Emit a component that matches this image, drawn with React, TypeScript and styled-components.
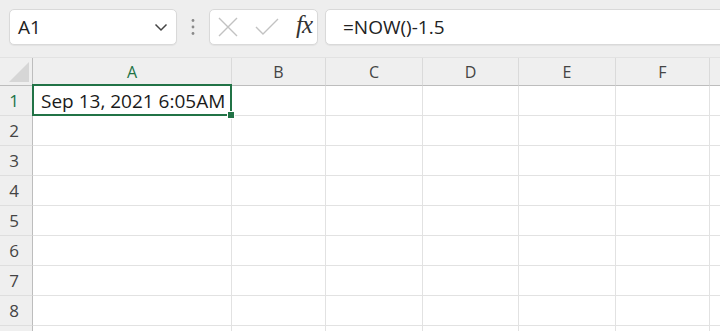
import React from 'react';
import styled, { createGlobalStyle } from 'styled-components';

const GlobalStyle = createGlobalStyle`
  html, body {
    margin: 0;
    padding: 0;
    background: #eeeeee;
    overflow: hidden;
  }
`;

const Page = styled.div`
  width: 720px;
  height: 331px;
  overflow: hidden;
  font-family: 'Open Sans', 'Noto Sans', sans-serif;
  background: #eeeeee;
`;

const Toolbar = styled.div`
  display: flex;
  align-items: center;
  height: 57px;
  padding: 0 0 3px 9px;
  box-sizing: border-box;
`;

const Box = styled.div<{ $width?: string }>`
  display: flex;
  align-items: center;
  height: 36px;
  box-sizing: border-box;
  width: ${(p) => p.$width || 'auto'};
  background: #fff;
  border: 1px solid #d9d9d9;
  border-radius: 5px;
  box-shadow: 0 1px 1px rgba(0, 0, 0, 0.05);
`;

const NameBox = styled(Box)`
  justify-content: space-between;
  padding: 0 8px 0 8px;
  font-size: 19px;
  color: #222;
`;

const Dots = styled.div`
  width: 32px;
  display: flex;
  justify-content: center;
`;

const FxBox = styled(Box)`
  margin-right: 7px;
  padding: 0 5px 0 8px;
  justify-content: space-between;
`;

const Fx = styled.span`
  font-family: 'Liberation Serif', 'DejaVu Serif', serif;
  font-style: italic;
  font-size: 25px;
  color: #333;
  letter-spacing: -1px;
  padding-bottom: 4px;
`;

const FormulaBox = styled(Box)`
  flex: 1;
  margin-right: -10px;
  padding-left: 17px;
  font-size: 19px;
  color: #222;
`;

// the last column runs past the window edge, as in the reference
const Grid = styled.div`
  display: grid;
  width: 806px;
  grid-template-columns: 33px 199px 94px 97px 96px 97px 94px 96px;
  grid-template-rows: 28px;
  grid-auto-rows: 30px;
  background: #fff;
  border-top: 1px solid #e2e2e2;
`;

const ColHead = styled.div<{ $active?: boolean }>`
  display: flex;
  align-items: center;
  justify-content: center;
  background: #efefef;
  border-right: 1px solid #dadada;
  border-bottom: 1px solid #bdbdbd;
  font-size: 16px;
  color: ${(p) => (p.$active ? '#217346' : '#444')};
`;

const Corner = styled.div`
  position: relative;
  background: #efefef;
  border-right: 1px solid #bdbdbd;
  border-bottom: 1px solid #bdbdbd;
`;

const RowHead = styled.div<{ $active?: boolean }>`
  display: flex;
  align-items: center;
  justify-content: center;
  padding-right: 4px;
  background: #efefef;
  border-right: 1px solid #bdbdbd;
  border-bottom: 1px solid #dedede;
  font-size: 17px;
  color: ${(p) => (p.$active ? '#217346' : '#444')};
`;

const Cell = styled.div<{ $selected?: boolean }>`
  position: relative;
  display: flex;
  align-items: center;
  padding-left: 8px;
  border-right: 1px solid #e2e2e2;
  border-bottom: 1px solid #e2e2e2;
  font-size: 19px;
  color: #1a1a1a;
  white-space: nowrap;
  ${(p) =>
    p.$selected &&
    `
    &::after {
      content: '';
      position: absolute;
      top: -2px;
      left: -1px;
      right: -1px;
      bottom: -1px;
      border: 2px solid #217346;
      pointer-events: none;
    }
  `}
`;

const Handle = styled.span`
  position: absolute;
  right: -4px;
  bottom: -4px;
  width: 6px;
  height: 6px;
  background: #217346;
  border: 1px solid #fff;
  z-index: 2;
`;

// the G column only shows its first pixels, so its letter stays out of view
const columns = ['A', 'B', 'C', 'D', 'E', 'F', 'G'];
const visibleHeads = ['A', 'B', 'C', 'D', 'E', 'F'];
const rows = [1, 2, 3, 4, 5, 6, 7, 8, 9];

function App() {
  return (
    <Page>
      <GlobalStyle />
      <Toolbar>
        <NameBox $width="168px">
          <span>A1</span>
          <svg width="14" height="9" viewBox="0 0 14 9">
            <path d="M1.5 1.5 L7 7 L12.5 1.5" fill="none" stroke="#444" strokeWidth="1.5" />
          </svg>
        </NameBox>
        <Dots>
          <svg width="4" height="18" viewBox="0 0 4 18">
            <circle cx="2" cy="2.5" r="1.4" fill="#8a8a8a" />
            <circle cx="2" cy="9" r="1.4" fill="#8a8a8a" />
            <circle cx="2" cy="15.5" r="1.4" fill="#8a8a8a" />
          </svg>
        </Dots>
        <FxBox $width="109px">
          <svg width="20" height="20" viewBox="0 0 20 20">
            <path d="M1 1 L19 19 M19 1 L1 19" stroke="#c2c2c2" strokeWidth="1.4" fill="none" />
          </svg>
          <svg width="24" height="18" viewBox="0 0 24 18">
            <path d="M1 9 L8 16 L23 1" stroke="#c2c2c2" strokeWidth="1.4" fill="none" />
          </svg>
          <Fx>fx</Fx>
        </FxBox>
        <FormulaBox>=NOW()-1.5</FormulaBox>
      </Toolbar>
      <Grid>
        <Corner>
          <svg width="20" height="20" viewBox="0 0 20 20" style={{ position: 'absolute', right: 3, bottom: 3 }}>
            <path d="M20 0 L20 20 L0 20 Z" fill="#d6d6d6" />
          </svg>
        </Corner>
        {columns.map((c) => (
          <ColHead key={c} $active={c === 'A'}>
            {visibleHeads.includes(c) ? c : ''}
          </ColHead>
        ))}
        {rows.map((r) => (
          <React.Fragment key={r}>
            <RowHead $active={r === 1}>{r < 9 ? r : ''}</RowHead>
            {columns.map((c) =>
              r === 1 && c === 'A' ? (
                <Cell key={c} $selected>
                  Sep 13, 2021 6:05AM
                  <Handle />
                </Cell>
              ) : (
                <Cell key={c} />
              )
            )}
          </React.Fragment>
        ))}
      </Grid>
    </Page>
  );
}

export default App;
